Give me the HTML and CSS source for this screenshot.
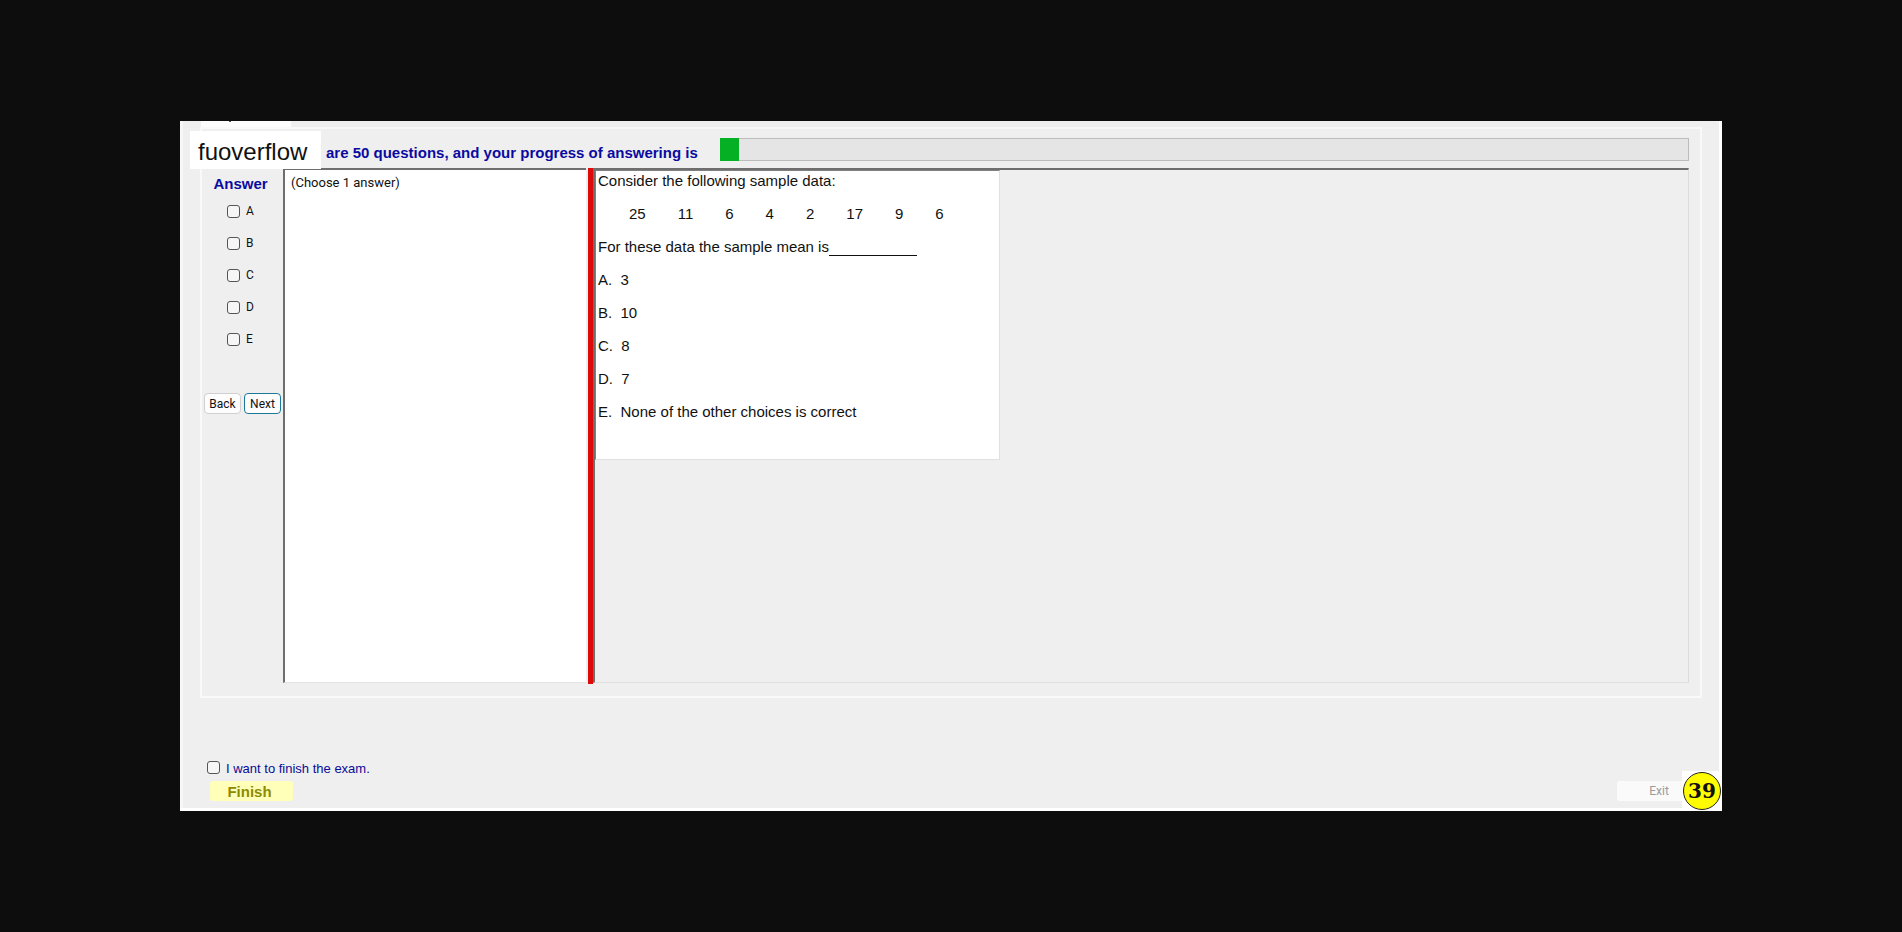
FILE: index.html
```
<!DOCTYPE html>
<html lang="en">
<head>
<meta charset="utf-8">
<title>Exam</title>
<link rel="stylesheet" href="styles.css">
</head>
<body>
<main class="window">
  <div class="tab"></div>
  <section class="frame">
    <header class="header">
      <label class="heading" for="progress">are 50 questions, and your progress of answering is</label>
      <progress class="progress" id="progress" value="1" max="50"></progress>
    </header>
    <div class="columns">
      <aside class="side">
        <h2 class="heading side-title">Answer</h2>
        <div class="choices">
          <label class="choice"><input class="tick" type="checkbox">A</label>
          <label class="choice"><input class="tick" type="checkbox">B</label>
          <label class="choice"><input class="tick" type="checkbox">C</label>
          <label class="choice"><input class="tick" type="checkbox">D</label>
          <label class="choice"><input class="tick" type="checkbox">E</label>
        </div>
        <nav class="nav">
          <button class="nav-button" type="button">Back</button>
          <button class="nav-button nav-next" type="button">Next</button>
        </nav>
      </aside>
      <section class="hint">(Choose 1 answer)</section>
      <div class="splitter"></div>
      <section class="viewer">
        <article class="question">
          <p class="line">Consider the following sample data:</p>
          <p class="line data"><span>25</span><span>11</span><span>6</span><span>4</span><span>2</span><span>17</span><span>9</span><span>6</span></p>
          <p class="line stem"><span>For these data the sample mean is</span><span class="blank"></span></p>
          <p class="line">A.&nbsp; 3</p>
          <p class="line">B.&nbsp; 10</p>
          <p class="line">C.&nbsp; 8</p>
          <p class="line">D.&nbsp; 7</p>
          <p class="line">E.&nbsp; None of the other choices is correct</p>
        </article>
      </section>
    </div>
  </section>
  <footer class="footer">
    <label class="confirm"><input class="tick" type="checkbox"><span>I want to finish the exam.</span></label>
    <div class="actions">
      <button class="finish" type="button">Finish</button>
      <button class="exit" type="button" disabled>Exit</button>
    </div>
  </footer>
  <div class="brand">fuoverflow</div>
  <div class="counter"><span class="counter-disc">39</span></div>
</main>
</body>
</html>
```
FILE: styles.css
```
* { box-sizing: border-box; }

body {
  margin: 0;
  min-height: 100vh;
  padding: 121px 180px;
  display: flex;
  background: #0d0d0d;
  color: #111;
  font-family: "Liberation Sans", Arial, sans-serif;
  font-size: 15px;
}

h2, p { margin: 0; }

.window {
  position: relative;
  flex: 1;
  min-width: 0;
  display: flex;
  flex-direction: column;
  background: #efefef;
  border: solid #fff;
  border-width: 0 3px 3px 0;
  box-shadow: inset 3px 0 #f7f7f7;
}

.tab {
  width: 90px;
  height: 6px;
  margin-left: 21px;
  background: #fcfcfc linear-gradient(#555, #555) 28px 0 / 2px 1px no-repeat;
}

.frame {
  flex: 1;
  display: flex;
  flex-direction: column;
  margin: 0 17px 0 20px;
  padding-bottom: 12px;
  border: 2px solid #f9f9f9;
}

.header {
  display: flex;
  align-items: center;
  gap: 22px;
  height: 39px;
  padding: 0 11px 0 124px;
}

.heading {
  color: #0a0aa0;
  font-size: 15px;
  font-weight: bold;
  line-height: 18px;
  white-space: nowrap;
}

.header .heading { margin-top: 8px; }

.progress {
  appearance: none;
  flex: 1;
  min-width: 0;
  height: 23px;
  margin-top: 1px;
  border: 0;
}

.progress::-webkit-progress-bar {
  background: #e5e5e5;
  box-shadow: inset 0 0 0 1px #bcbcbc;
}

.progress::-webkit-progress-value { background: #06b025; }

.columns {
  flex: 1;
  display: flex;
  padding-right: 11px;
}

.side {
  width: 81px;
  padding: 7px 2px 0 2px;
}

.side-title {
  padding-right: 4px;
  padding-bottom: 2px;
  text-align: center;
}

.choices { padding-left: 23px; }

.choice {
  display: flex;
  align-items: center;
  gap: 6px;
  height: 32px;
  font-family: Roboto, sans-serif;
  font-size: 12px;
}

.tick {
  appearance: none;
  flex: none;
  width: 13px;
  height: 13px;
  margin: 0;
  background: #f6f6f6;
  border: 1px solid #555;
  border-radius: 3px;
}

.nav {
  display: flex;
  gap: 3px;
  margin-top: 38px;
}

.nav-button {
  flex: 1;
  height: 21px;
  padding: 0;
  background: #fdfdfd;
  border: 1px solid #d0d0d0;
  border-radius: 4px;
  color: #111;
  font-family: Roboto, sans-serif;
  font-size: 12px;
}

.nav-next { border-color: #1c7a98; }

.hint {
  width: 303px;
  margin-bottom: 1px;
  padding: 5px 6px;
  background: #fff;
  border: solid #6e6e6e;
  border-width: 2px 0 0 2px;
  border-bottom: 1px solid #e3e3e3;
  font-family: Roboto, sans-serif;
  font-size: 13px;
  line-height: 16px;
}

.splitter {
  width: 5px;
  margin-left: 2px;
  background: #dd0a0a;
}

.viewer {
  flex: 1;
  min-width: 0;
  margin-bottom: 1px;
  border: 2px solid #6e6e6e;
  border-right: 1px solid #dcdcdc;
  border-bottom: 1px solid #e0e0e0;
}

.question {
  width: 405px;
  height: 290px;
  padding: 1px 0 0 2px;
  background: #fff;
  border: 1px solid #e0e0e0;
  border-top-color: #808080;
  border-left-color: #808080;
}

.line {
  margin-bottom: 15px;
  line-height: 18px;
  white-space: nowrap;
}

.data {
  display: flex;
  gap: 32px;
  padding-left: 31px;
}

.stem { display: flex; }

.blank {
  width: 88px;
  border-bottom: 1px solid #111;
}

.footer {
  padding: 60px 0 7px 27px;
}

.confirm {
  display: flex;
  align-items: center;
  gap: 6px;
  height: 18px;
  color: #0a0a96;
  font-size: 13px;
}

.confirm span { padding-top: 3px; }

.actions {
  display: flex;
  justify-content: space-between;
  padding: 5px 22px 0 3px;
}

.finish,
.exit {
  height: 20px;
  padding: 0;
  border: 0;
  border-radius: 3px;
}

.finish {
  width: 83px;
  padding: 1px 4px 0 0;
  background: #ffffba;
  color: #8c8c00;
  font-family: inherit;
  font-size: 15px;
  font-weight: bold;
}

.exit {
  width: 80px;
  padding-left: 4px;
  background: #fafafa;
  color: #9a9a9a;
  font-family: Roboto, sans-serif;
  font-size: 12px;
}

.brand {
  position: absolute;
  left: 10px;
  top: 10px;
  width: 131px;
  padding: 4px 0 0 8px;
  background: #fff;
  font-size: 24px;
  line-height: 34px;
}

.counter {
  position: absolute;
  right: -3px;
  bottom: -3px;
  padding: 1px;
  background: #fff;
}

.counter-disc {
  display: block;
  width: 38px;
  height: 38px;
  border: 1px solid #222;
  border-radius: 50%;
  background: #fffb00;
  font-family: "DejaVu Serif", serif;
  font-size: 20px;
  font-weight: bold;
  line-height: 36px;
  text-align: center;
}
```
